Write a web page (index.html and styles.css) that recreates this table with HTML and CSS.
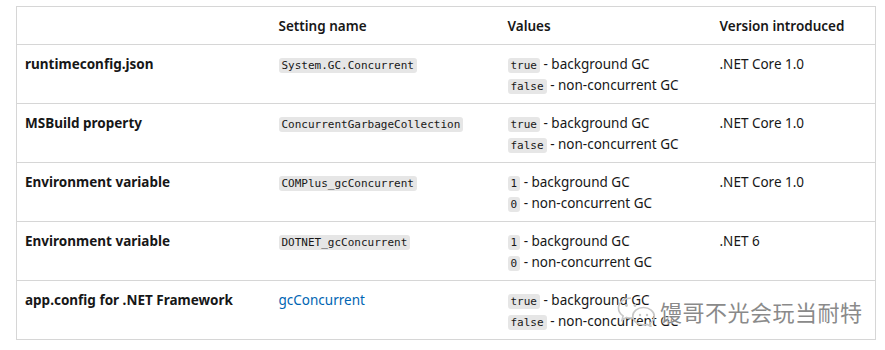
FILE: index.html
```html
<!DOCTYPE html>
<html lang="en">
<head>
    <meta charset="UTF-8">
    <title>GC Concurrent settings</title>
    <link rel="stylesheet" href="styles.css">
</head>
<body>
    <div class="page">
        <table class="settings">
            <thead>
                <tr>
                    <th class="col-source"></th>
                    <th class="col-name">Setting name</th>
                    <th class="col-values">Values</th>
                    <th class="col-version">Version introduced</th>
                </tr>
            </thead>
            <tbody>
                <tr>
                    <td class="source">runtimeconfig.json</td>
                    <td><code>System.GC.Concurrent</code></td>
                    <td>
                        <div class="value"><code>true</code> - background GC</div>
                        <div class="value"><code>false</code> - non-concurrent GC</div>
                    </td>
                    <td>.NET Core 1.0</td>
                </tr>
                <tr>
                    <td class="source">MSBuild property</td>
                    <td><code>ConcurrentGarbageCollection</code></td>
                    <td>
                        <div class="value"><code>true</code> - background GC</div>
                        <div class="value"><code>false</code> - non-concurrent GC</div>
                    </td>
                    <td>.NET Core 1.0</td>
                </tr>
                <tr>
                    <td class="source">Environment variable</td>
                    <td><code>COMPlus_gcConcurrent</code></td>
                    <td>
                        <div class="value"><code>1</code> - background GC</div>
                        <div class="value"><code>0</code> - non-concurrent GC</div>
                    </td>
                    <td>.NET Core 1.0</td>
                </tr>
                <tr>
                    <td class="source">Environment variable</td>
                    <td><code>DOTNET_gcConcurrent</code></td>
                    <td>
                        <div class="value"><code>1</code> - background GC</div>
                        <div class="value"><code>0</code> - non-concurrent GC</div>
                    </td>
                    <td>.NET 6</td>
                </tr>
                <tr>
                    <td class="source">app.config for .NET Framework</td>
                    <td><a href="#" class="link">gcConcurrent</a></td>
                    <td>
                        <div class="value"><code>true</code> - background GC</div>
                        <div class="value"><code>false</code> - non-concurrent GC</div>
                    </td>
                    <td></td>
                </tr>
            </tbody>
        </table>

        <!-- watermark over the last row -->
        <div class="watermark">
            <svg class="wm-icon" width="40" height="32" viewBox="0 0 40 32">
                <path d="M15 3C8 3 2.5 7.5 2.5 13c0 3.2 1.8 6 4.6 7.8L6 25l4.6-2.6c1.4.4 2.9.6 4.4.6.5 0 1 0 1.5-.1" fill="none" stroke="#c8c8c8" stroke-width="1.6"/>
                <path d="M27.5 12.5c-6 0-10.8 3.9-10.8 8.7s4.8 8.7 10.8 8.7c1.2 0 2.4-.2 3.5-.5l3.8 2.1-1-3.4c2.7-1.6 4.5-4.1 4.5-6.9 0-4.8-4.8-8.7-10.8-8.7z" fill="none" stroke="#c8c8c8" stroke-width="1.6"/>
                <circle cx="10.5" cy="10.5" r="1.4" fill="#c8c8c8"/>
                <circle cx="19" cy="10.5" r="1.4" fill="#c8c8c8"/>
                <circle cx="24" cy="20" r="1.2" fill="#c8c8c8"/>
                <circle cx="31" cy="20" r="1.2" fill="#c8c8c8"/>
            </svg>
            <span class="wm-text">馒哥不光会玩当耐特</span>
        </div>
    </div>
</body>
</html>
```

FILE: styles.css
```css
* {
    margin: 0;
    padding: 0;
    box-sizing: border-box;
}

body {
    font-family: "Noto Sans", "Open Sans", sans-serif;
    font-size: 13.5px;
    color: #171717;
    background: #ffffff;
}

.page {
    position: relative;
    padding: 6px 10px 0 16px;
}

.settings {
    width: 860px;
    border-collapse: collapse;
    border: 1px solid #d6d6d6;
}

.settings th {
    text-align: left;
    font-weight: 600;
    height: 38px;
    padding: 0 8px;
    border-bottom: 1px solid #d6d6d6;
}

.settings td {
    vertical-align: top;
    height: 59px;
    padding: 9px 8px 0;
    line-height: 20px;
    border-bottom: 1px solid #d6d6d6;
}

.col-source { width: 254px; }
.col-name { width: 229px; }
.col-values { width: 212px; }

.source {
    font-weight: 700;
}

code {
    font-family: "DejaVu Sans Mono", "Liberation Mono", monospace;
    font-size: 11px;
    background: #e6e6e6;
    border-radius: 3px;
    padding: 1px 3px;
}

.value {
    height: 20.5px;
}

.link {
    color: #0065b3;
    text-decoration: none;
}

.watermark {
    position: absolute;
    left: 616px;
    top: 295px;
    display: flex;
    align-items: center;
    gap: 4px;
}

.wm-text {
    font-family: "Noto Sans CJK SC", sans-serif;
    font-size: 22px;
    color: #8a8a8a;
    letter-spacing: 0.5px;
    text-shadow: 0 0 2px #ffffff, 0 0 2px #ffffff;
}
```
